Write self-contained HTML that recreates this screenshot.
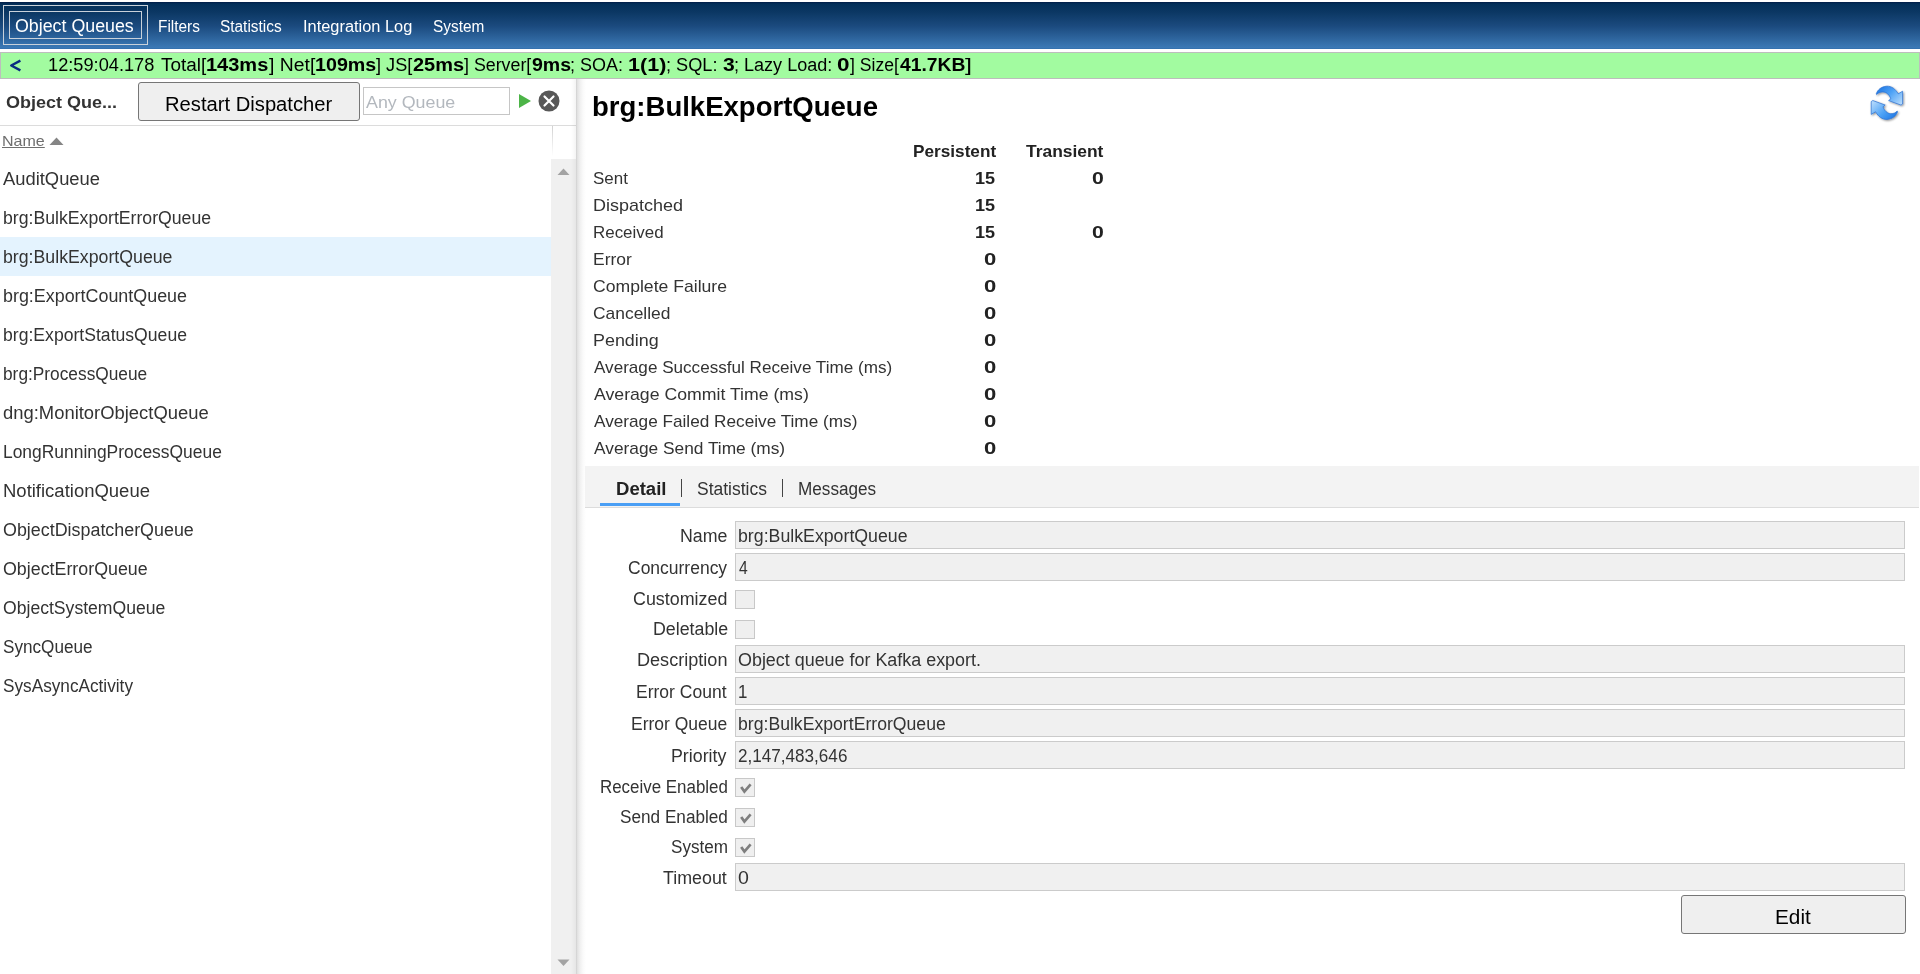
<!DOCTYPE html>
<html><head><meta charset="utf-8">
<style>
html,body{margin:0;padding:0;width:1920px;height:974px;overflow:hidden;background:#fff;}
body{font-family:"Liberation Sans",sans-serif;position:relative;color:#333;}
.a{position:absolute;}
.t{position:absolute;white-space:pre;transform-origin:0 0;font-family:"Liberation Sans",sans-serif;}
#hdr{position:absolute;left:0;top:2px;width:1920px;height:47px;background:linear-gradient(#011d48 0px,#03305a 2px,#0b3763 10px,#1b4a7e 24px,#3c79b6 46px,#2f6aa8 47px);}
#status{position:absolute;left:0;top:52px;width:1918px;height:25px;background:#a2fba0;border:1px solid #bdbdbd;}
.btn{position:absolute;background:#efefef;border:1px solid #767676;border-radius:3px;box-sizing:border-box;}
.inp{position:absolute;left:735px;width:1170px;height:28px;box-sizing:border-box;background:#f0f0f0;border:1px solid #cbcbcb;}
.cb{position:absolute;left:735px;width:20px;height:19px;box-sizing:border-box;background:#efefef;border:1px solid #c8c8c8;}
.ck{position:absolute;left:0;top:0;}
</style></head><body>

<div id="hdr"></div>
<div class="a" style="left:3px;top:5px;width:143px;height:38px;border:1px solid #c9d1da;"></div>
<div class="a" style="left:9px;top:11px;width:131px;height:26px;border:1px solid #c9d1da;"></div>

<div id="status"></div>
<svg class="a" style="left:0;top:52px" width="30" height="27" viewBox="0 52 30 27"><polyline points="20.4,60.6 11.2,65.5 20.4,70.4" fill="none" stroke="#0a2c82" stroke-width="2.4" stroke-linejoin="round"/></svg>

<!-- left panel -->
<div class="btn" style="left:138px;top:82px;width:222px;height:39px;"></div>
<div class="a" style="left:363px;top:87px;width:147px;height:28px;box-sizing:border-box;border:1px solid #c6c6c6;background:#fff;"></div>
<svg class="a" style="left:519px;top:94px" width="13" height="15" viewBox="0 0 13 15"><path d="M0 0 L12 7 L0 14 Z" fill="#4cb447"/></svg>
<svg class="a" style="left:538px;top:90px" width="22" height="22" viewBox="0 0 22 22"><circle cx="11" cy="11" r="10.5" fill="#585858"/><path d="M6.5 6.5 L15.5 15.5 M15.5 6.5 L6.5 15.5" stroke="#fff" stroke-width="2.2" stroke-linecap="round"/></svg>
<div class="a" style="left:0;top:125px;width:576px;height:1px;background:#dcdcdc;"></div>

<svg class="a" style="left:49px;top:137px" width="16" height="9" viewBox="0 0 16 9"><path d="M0.5 8 L7.5 0.5 L14.5 8 Z" fill="#858585"/></svg>
<div class="a" style="left:551.5px;top:126px;width:1.5px;height:30px;background:linear-gradient(#d2d2d2,#fff);"></div>

<div class="a" style="left:0;top:237px;width:551px;height:39px;background:#e4f3fe;"></div>

<div class="a" style="left:551px;top:159px;width:25px;height:815px;background:#f0f0f0;"></div>
<svg class="a" style="left:557px;top:168px" width="13" height="8" viewBox="0 0 13 8"><path d="M0.5 7 L6.5 0.5 L12.5 7 Z" fill="#a3a3a3"/></svg>
<svg class="a" style="left:557px;top:959px" width="13" height="8" viewBox="0 0 13 8"><path d="M0.5 0.5 L6.5 7 L12.5 0.5 Z" fill="#a3a3a3"/></svg>
<div class="a" style="left:571px;top:79px;width:5px;height:895px;background:linear-gradient(to right,rgba(0,0,0,0),rgba(0,0,0,0.045));"></div>
<div class="a" style="left:576px;top:79px;width:10px;height:895px;background:linear-gradient(to right,#cfcfcf,#e2e2e2 14%,#f0f0f0 40%,#fafafa 70%,rgba(255,255,255,0));"></div>

<!-- right panel -->
<svg class="a" style="left:1860px;top:80px" width="55" height="48" viewBox="0 0 55 48">
<defs>
<linearGradient id="g1" gradientUnits="userSpaceOnUse" x1="20" y1="6" x2="40" y2="26"><stop offset="0" stop-color="#1f78e4"/><stop offset="0.45" stop-color="#4fa3f6"/><stop offset="1" stop-color="#b9dcfc"/></linearGradient>
<linearGradient id="g2" gradientUnits="userSpaceOnUse" x1="33.8" y1="39.6" x2="13.8" y2="19.6"><stop offset="0" stop-color="#1f78e4"/><stop offset="0.45" stop-color="#4fa3f6"/><stop offset="1" stop-color="#b9dcfc"/></linearGradient>
<filter id="sh" x="-20%" y="-20%" width="140%" height="140%"><feGaussianBlur in="SourceAlpha" stdDeviation="0.9"/><feOffset dx="0.6" dy="0.9"/><feComponentTransfer><feFuncA type="linear" slope="0.45"/></feComponentTransfer><feMerge><feMergeNode/><feMergeNode in="SourceGraphic"/></feMerge></filter>
</defs>
<g filter="url(#sh)" stroke="#2a6fd0" stroke-width="0.7" stroke-linejoin="round">
<path d="M16.3 13.8 C17.5 10 21 6.6 26.8 6.2 C31.5 6 35.5 9 38.2 13.8 L42.6 11.2 L42.6 24 L41 25.1 L28.6 20.6 L30.8 18.8 C29.5 15 26.5 12 23 11.9 C20 11.8 18 13 16.6 14.6 Z" fill="url(#g1)"/>
<path d="M37.5 31.8 C36.3 35.6 32.8 39 27 39.4 C22.3 39.6 18.3 36.6 15.6 31.8 L11.2 34.4 L11.2 21.6 L12.8 20.5 L25.2 25 L23 26.8 C24.3 30.6 27.3 33.6 30.8 33.7 C33.8 33.8 35.8 32.6 37.2 31 Z" fill="url(#g2)"/>
</g>
</svg>

<!-- tabs -->
<div class="a" style="left:585px;top:466px;width:1334px;height:41px;background:#f3f3f3;border-bottom:1px solid #dcdcdc;"></div>
<div class="a" style="left:681px;top:479px;width:1px;height:18px;background:#444;"></div>
<div class="a" style="left:782px;top:479px;width:1px;height:18px;background:#444;"></div>
<div class="a" style="left:600px;top:503px;width:80px;height:3px;background:#4a9ff5;"></div>

<!-- form -->
<div class="inp" style="top:521px;"></div>
<div class="inp" style="top:553px;"></div>
<div class="cb" style="top:590px;"></div>
<div class="cb" style="top:620px;"></div>
<div class="inp" style="top:645px;"></div>
<div class="inp" style="top:677px;"></div>
<div class="inp" style="top:709px;"></div>
<div class="inp" style="top:741px;"></div>
<div class="cb" style="top:778px;"><svg class="ck" width="20" height="19" viewBox="0 0 20 19"><path d="M5.2 8.0 L8.4 12.6 L14.6 5.4" fill="none" stroke="#7f7f7f" stroke-width="2.7"/></svg></div>
<div class="cb" style="top:808px;"><svg class="ck" width="20" height="19" viewBox="0 0 20 19"><path d="M5.2 8.0 L8.4 12.6 L14.6 5.4" fill="none" stroke="#7f7f7f" stroke-width="2.7"/></svg></div>
<div class="cb" style="top:838px;"><svg class="ck" width="20" height="19" viewBox="0 0 20 19"><path d="M5.2 8.0 L8.4 12.6 L14.6 5.4" fill="none" stroke="#7f7f7f" stroke-width="2.7"/></svg></div>
<div class="inp" style="top:863px;"></div>

<div class="btn" style="left:1681px;top:895px;width:225px;height:39px;"></div>

<div class="t" style="left:15.31px;top:17.0px;font-size:18px;line-height:18px;font-weight:400;color:#fff;transform:scaleX(0.9890);">Object Queues</div>
<div class="t" style="left:158.04px;top:18.8px;font-size:16px;line-height:16px;font-weight:400;color:#fff;transform:scaleX(0.9619);">Filters</div>
<div class="t" style="left:220.34px;top:18.8px;font-size:16px;line-height:16px;font-weight:400;color:#fff;transform:scaleX(0.9619);">Statistics</div>
<div class="t" style="left:302.98px;top:18.8px;font-size:16px;line-height:16px;font-weight:400;color:#fff;transform:scaleX(1.0238);">Integration Log</div>
<div class="t" style="left:433.24px;top:18.8px;font-size:16px;line-height:16px;font-weight:400;color:#fff;transform:scaleX(0.9608);">System</div>
<div class="t" style="left:48.49px;top:56.0px;font-size:18px;line-height:18px;font-weight:400;color:#000;transform:scaleX(1.0121);">12:59:04.178</div>
<div class="t" style="left:161.00px;top:56.0px;font-size:18px;line-height:18px;font-weight:400;color:#000;transform:scaleX(1.0523);">Total[</div>
<div class="t" style="left:206.39px;top:56.0px;font-size:18px;line-height:18px;font-weight:700;color:#000;transform:scaleX(1.1111);">143ms</div>
<div class="t" style="left:268.75px;top:56.0px;font-size:18px;line-height:18px;font-weight:400;color:#000;transform:scaleX(1.0756);">] Net[</div>
<div class="t" style="left:314.91px;top:56.0px;font-size:18px;line-height:18px;font-weight:700;color:#000;transform:scaleX(1.0926);">109ms</div>
<div class="t" style="left:376.25px;top:56.0px;font-size:18px;line-height:18px;font-weight:400;color:#000;transform:scaleX(1.0069);">] JS[</div>
<div class="t" style="left:412.64px;top:56.0px;font-size:18px;line-height:18px;font-weight:700;color:#000;transform:scaleX(1.1080);">25ms</div>
<div class="t" style="left:463.75px;top:56.0px;font-size:18px;line-height:18px;font-weight:400;color:#000;transform:scaleX(0.9890);">] Server[</div>
<div class="t" style="left:531.91px;top:56.0px;font-size:18px;line-height:18px;font-weight:700;color:#000;transform:scaleX(1.0853);">9ms</div>
<div class="t" style="left:569.50px;top:56.0px;font-size:18px;line-height:18px;font-weight:400;color:#000;transform:scaleX(0.9980);">; SOA:</div>
<div class="t" style="left:628.10px;top:56.0px;font-size:18px;line-height:18px;font-weight:700;color:#000;transform:scaleX(1.1967);">1(1)</div>
<div class="t" style="left:665.78px;top:56.0px;font-size:18px;line-height:18px;font-weight:400;color:#000;transform:scaleX(1.0085);">; SQL:</div>
<div class="t" style="left:722.83px;top:56.0px;font-size:18px;line-height:18px;font-weight:700;color:#000;transform:scaleX(1.1750);">3</div>
<div class="t" style="left:733.50px;top:56.0px;font-size:18px;line-height:18px;font-weight:400;color:#000;transform:scaleX(1.0021);">; Lazy Load:</div>
<div class="t" style="left:836.55px;top:56.0px;font-size:18px;line-height:18px;font-weight:700;color:#000;transform:scaleX(1.2500);">0</div>
<div class="t" style="left:850.00px;top:56.0px;font-size:18px;line-height:18px;font-weight:400;color:#000;transform:scaleX(0.9760);">] Size[</div>
<div class="t" style="left:900.00px;top:56.0px;font-size:18px;line-height:18px;font-weight:700;color:#000;transform:scaleX(1.0717);">41.7KB</div>
<div class="t" style="left:965.00px;top:56.0px;font-size:18px;line-height:18px;font-weight:400;color:#000;transform:scaleX(1.4000);">]</div>
<div class="t" style="left:5.94px;top:93.5px;font-size:17px;line-height:17px;font-weight:700;color:#333;transform:scaleX(1.0583);">Object Que...</div>
<div class="t" style="left:164.88px;top:94.1px;font-size:20px;line-height:20px;font-weight:400;color:#000;transform:scaleX(1.0098);">Restart Dispatcher</div>
<div class="t" style="left:365.90px;top:93.8px;font-size:17px;line-height:17px;font-weight:400;color:#b3b8be;transform:scaleX(1.0488);">Any Queue</div>
<div class="t" style="left:2.23px;top:132.9px;font-size:15px;line-height:15px;font-weight:400;color:#6e6e6e;transform:scaleX(1.0692);text-decoration:underline;">Name</div>
<div class="t" style="left:3.30px;top:170.0px;font-size:18px;line-height:18px;font-weight:400;color:#333;transform:scaleX(1.0202);">AuditQueue</div>
<div class="t" style="left:3.22px;top:209.0px;font-size:18px;line-height:18px;font-weight:400;color:#333;transform:scaleX(0.9810);">brg:BulkExportErrorQueue</div>
<div class="t" style="left:3.22px;top:248.0px;font-size:18px;line-height:18px;font-weight:400;color:#333;transform:scaleX(0.9847);">brg:BulkExportQueue</div>
<div class="t" style="left:3.21px;top:287.0px;font-size:18px;line-height:18px;font-weight:400;color:#333;transform:scaleX(0.9940);">brg:ExportCountQueue</div>
<div class="t" style="left:3.22px;top:326.0px;font-size:18px;line-height:18px;font-weight:400;color:#333;transform:scaleX(0.9780);">brg:ExportStatusQueue</div>
<div class="t" style="left:3.24px;top:365.0px;font-size:18px;line-height:18px;font-weight:400;color:#333;transform:scaleX(0.9608);">brg:ProcessQueue</div>
<div class="t" style="left:3.18px;top:404.0px;font-size:18px;line-height:18px;font-weight:400;color:#333;transform:scaleX(1.0226);">dng:MonitorObjectQueue</div>
<div class="t" style="left:3.23px;top:443.0px;font-size:18px;line-height:18px;font-weight:400;color:#333;transform:scaleX(0.9676);">LongRunningProcessQueue</div>
<div class="t" style="left:3.17px;top:482.0px;font-size:18px;line-height:18px;font-weight:400;color:#333;transform:scaleX(1.0270);">NotificationQueue</div>
<div class="t" style="left:3.21px;top:521.0px;font-size:18px;line-height:18px;font-weight:400;color:#333;transform:scaleX(0.9932);">ObjectDispatcherQueue</div>
<div class="t" style="left:3.21px;top:560.0px;font-size:18px;line-height:18px;font-weight:400;color:#333;transform:scaleX(0.9903);">ObjectErrorQueue</div>
<div class="t" style="left:3.22px;top:599.0px;font-size:18px;line-height:18px;font-weight:400;color:#333;transform:scaleX(0.9774);">ObjectSystemQueue</div>
<div class="t" style="left:3.25px;top:638.0px;font-size:18px;line-height:18px;font-weight:400;color:#333;transform:scaleX(0.9522);">SyncQueue</div>
<div class="t" style="left:3.24px;top:677.0px;font-size:18px;line-height:18px;font-weight:400;color:#333;transform:scaleX(0.9556);">SysAsyncActivity</div>
<div class="t" style="left:592.13px;top:93.0px;font-size:28px;line-height:28px;font-weight:700;color:#000;transform:scaleX(0.9830);">brg:BulkExportQueue</div>
<div class="t" style="left:912.74px;top:142.8px;font-size:17px;line-height:17px;font-weight:700;color:#222;transform:scaleX(1.0117);">Persistent</div>
<div class="t" style="left:1026.00px;top:142.8px;font-size:17px;line-height:17px;font-weight:700;color:#222;transform:scaleX(1.0240);">Transient</div>
<div class="t" style="left:592.70px;top:170.0px;font-size:17px;line-height:17px;font-weight:400;color:#333;transform:scaleX(0.9971);">Sent</div>
<div class="t" style="left:592.64px;top:197.0px;font-size:17px;line-height:17px;font-weight:400;color:#333;transform:scaleX(1.0578);">Dispatched</div>
<div class="t" style="left:592.70px;top:224.0px;font-size:17px;line-height:17px;font-weight:400;color:#333;transform:scaleX(0.9957);">Received</div>
<div class="t" style="left:592.67px;top:251.0px;font-size:17px;line-height:17px;font-weight:400;color:#333;transform:scaleX(1.0278);">Error</div>
<div class="t" style="left:592.66px;top:278.0px;font-size:17px;line-height:17px;font-weight:400;color:#333;transform:scaleX(1.0352);">Complete Failure</div>
<div class="t" style="left:592.68px;top:305.0px;font-size:17px;line-height:17px;font-weight:400;color:#333;transform:scaleX(1.0243);">Cancelled</div>
<div class="t" style="left:592.65px;top:332.0px;font-size:17px;line-height:17px;font-weight:400;color:#333;transform:scaleX(1.0533);">Pending</div>
<div class="t" style="left:593.70px;top:359.0px;font-size:17px;line-height:17px;font-weight:400;color:#333;transform:scaleX(1.0061);">Average Successful Receive Time (ms)</div>
<div class="t" style="left:593.70px;top:386.0px;font-size:17px;line-height:17px;font-weight:400;color:#333;transform:scaleX(1.0398);">Average Commit Time (ms)</div>
<div class="t" style="left:593.70px;top:413.0px;font-size:17px;line-height:17px;font-weight:400;color:#333;transform:scaleX(1.0112);">Average Failed Receive Time (ms)</div>
<div class="t" style="left:593.70px;top:440.0px;font-size:17px;line-height:17px;font-weight:400;color:#333;transform:scaleX(1.0182);">Average Send Time (ms)</div>
<div class="t" style="left:975.14px;top:170.0px;font-size:17px;line-height:17px;font-weight:700;color:#222;transform:scaleX(1.0611);">15</div>
<div class="t" style="left:975.14px;top:197.0px;font-size:17px;line-height:17px;font-weight:700;color:#222;transform:scaleX(1.0611);">15</div>
<div class="t" style="left:975.14px;top:224.0px;font-size:17px;line-height:17px;font-weight:700;color:#222;transform:scaleX(1.0611);">15</div>
<div class="t" style="left:983.70px;top:251.0px;font-size:17px;line-height:17px;font-weight:700;color:#222;transform:scaleX(1.3000);">0</div>
<div class="t" style="left:983.70px;top:278.0px;font-size:17px;line-height:17px;font-weight:700;color:#222;transform:scaleX(1.3000);">0</div>
<div class="t" style="left:983.70px;top:305.0px;font-size:17px;line-height:17px;font-weight:700;color:#222;transform:scaleX(1.3000);">0</div>
<div class="t" style="left:983.70px;top:332.0px;font-size:17px;line-height:17px;font-weight:700;color:#222;transform:scaleX(1.3000);">0</div>
<div class="t" style="left:983.70px;top:359.0px;font-size:17px;line-height:17px;font-weight:700;color:#222;transform:scaleX(1.3000);">0</div>
<div class="t" style="left:983.70px;top:386.0px;font-size:17px;line-height:17px;font-weight:700;color:#222;transform:scaleX(1.3000);">0</div>
<div class="t" style="left:983.70px;top:413.0px;font-size:17px;line-height:17px;font-weight:700;color:#222;transform:scaleX(1.3000);">0</div>
<div class="t" style="left:983.70px;top:440.0px;font-size:17px;line-height:17px;font-weight:700;color:#222;transform:scaleX(1.3000);">0</div>
<div class="t" style="left:1091.75px;top:170.0px;font-size:17px;line-height:17px;font-weight:700;color:#222;transform:scaleX(1.2500);">0</div>
<div class="t" style="left:1091.75px;top:224.0px;font-size:17px;line-height:17px;font-weight:700;color:#222;transform:scaleX(1.2500);">0</div>
<div class="t" style="left:615.57px;top:479.7px;font-size:18px;line-height:18px;font-weight:700;color:#222;transform:scaleX(1.0298);">Detail</div>
<div class="t" style="left:696.83px;top:479.7px;font-size:18px;line-height:18px;font-weight:400;color:#333;transform:scaleX(0.9714);">Statistics</div>
<div class="t" style="left:798.45px;top:479.7px;font-size:18px;line-height:18px;font-weight:400;color:#333;transform:scaleX(0.9525);">Messages</div>
<div class="t" style="left:680.21px;top:526.6px;font-size:18px;line-height:18px;font-weight:400;color:#333;transform:scaleX(0.9870);">Name</div>
<div class="t" style="left:738.41px;top:526.6px;font-size:18px;line-height:18px;font-weight:400;color:#333;transform:scaleX(0.9853);">brg:BulkExportQueue</div>
<div class="t" style="left:627.53px;top:558.6px;font-size:18px;line-height:18px;font-weight:400;color:#333;transform:scaleX(0.9713);">Concurrency</div>
<div class="t" style="left:739.40px;top:558.6px;font-size:18px;line-height:18px;font-weight:400;color:#333;transform:scaleX(0.8700);">4</div>
<div class="t" style="left:633.31px;top:589.5px;font-size:18px;line-height:18px;font-weight:400;color:#333;transform:scaleX(0.9925);">Customized</div>
<div class="t" style="left:652.51px;top:619.5px;font-size:18px;line-height:18px;font-weight:400;color:#333;transform:scaleX(0.9878);">Deletable</div>
<div class="t" style="left:637.20px;top:650.6px;font-size:18px;line-height:18px;font-weight:400;color:#333;transform:scaleX(1.0045);">Description</div>
<div class="t" style="left:738.40px;top:650.6px;font-size:18px;line-height:18px;font-weight:400;color:#333;transform:scaleX(0.9950);">Object queue for Kafka export.</div>
<div class="t" style="left:636.13px;top:682.6px;font-size:18px;line-height:18px;font-weight:400;color:#333;transform:scaleX(0.9728);">Error Count</div>
<div class="t" style="left:738.46px;top:682.6px;font-size:18px;line-height:18px;font-weight:400;color:#333;transform:scaleX(0.9375);">1</div>
<div class="t" style="left:631.43px;top:714.6px;font-size:18px;line-height:18px;font-weight:400;color:#333;transform:scaleX(0.9711);">Error Queue</div>
<div class="t" style="left:738.42px;top:714.6px;font-size:18px;line-height:18px;font-weight:400;color:#333;transform:scaleX(0.9795);">brg:BulkExportErrorQueue</div>
<div class="t" style="left:671.21px;top:746.6px;font-size:18px;line-height:18px;font-weight:400;color:#333;transform:scaleX(0.9891);">Priority</div>
<div class="t" style="left:738.45px;top:746.6px;font-size:18px;line-height:18px;font-weight:400;color:#333;transform:scaleX(0.9504);">2,147,483,646</div>
<div class="t" style="left:599.76px;top:777.5px;font-size:18px;line-height:18px;font-weight:400;color:#333;transform:scaleX(0.9396);">Receive Enabled</div>
<div class="t" style="left:619.75px;top:807.5px;font-size:18px;line-height:18px;font-weight:400;color:#333;transform:scaleX(0.9541);">Send Enabled</div>
<div class="t" style="left:670.55px;top:837.5px;font-size:18px;line-height:18px;font-weight:400;color:#333;transform:scaleX(0.9500);">System</div>
<div class="t" style="left:663.20px;top:868.6px;font-size:18px;line-height:18px;font-weight:400;color:#333;transform:scaleX(0.9906);">Timeout</div>
<div class="t" style="left:738.31px;top:868.6px;font-size:18px;line-height:18px;font-weight:400;color:#333;transform:scaleX(1.0875);">0</div>
<div class="t" style="left:1774.92px;top:906.9px;font-size:20px;line-height:20px;font-weight:400;color:#000;transform:scaleX(1.0375);">Edit</div>
</body></html>
